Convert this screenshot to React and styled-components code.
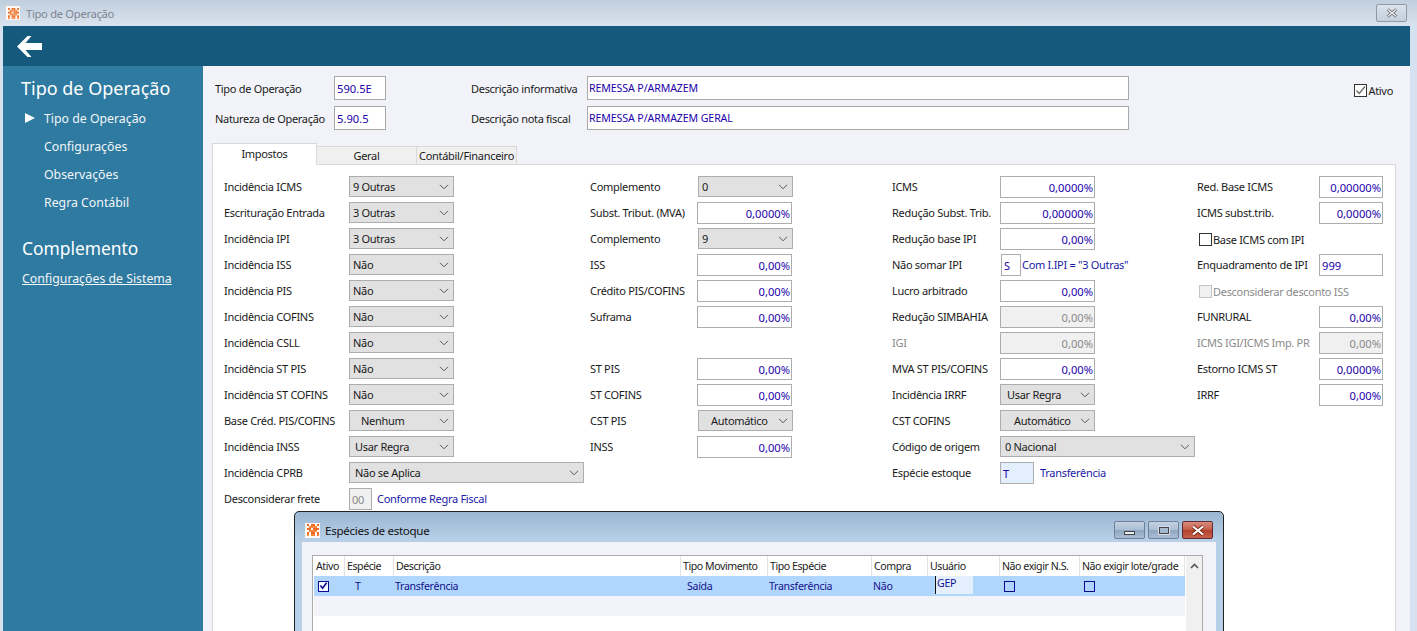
import React from "react";
import styled, { createGlobalStyle } from "styled-components";

const GlobalStyle = createGlobalStyle`
  html, body { margin: 0; padding: 0; background: #fff; }
  body {
    font-family: "Noto Sans", "Liberation Sans", sans-serif;
    font-size: 11px;
    letter-spacing: -0.3px;
    color: #1a1a1a;
  }
`;

const col1 = [
  { label: "Incidência ICMS", select: "9 Outras" },
  { label: "Escrituração Entrada", select: "3 Outras" },
  { label: "Incidência IPI", select: "3 Outras" },
  { label: "Incidência ISS", select: "Não" },
  { label: "Incidência PIS", select: "Não" },
  { label: "Incidência COFINS", select: "Não" },
  { label: "Incidência CSLL", select: "Não" },
  { label: "Incidência ST PIS", select: "Não" },
  { label: "Incidência ST COFINS", select: "Não" },
  { label: "Base Créd. PIS/COFINS", select: "Nenhum", pad: 8 },
  { label: "Incidência INSS", select: "Usar Regra", pad: 2 },
  { label: "Incidência CPRB", select: "Não se Aplica", pad: 2, width: 235 },
  { label: "Desconsiderar frete", code: "00", codeWidth: 23, codeOff: true, note: "Conforme Regra Fiscal", noteGap: 5 },
];

const col2 = [
  { label: "Complemento", select: "0", shift: 1 },
  { label: "Subst. Tribut. (MVA)", value: "0,0000%" },
  { label: "Complemento", select: "9", shift: 1 },
  { label: "ISS", value: "0,00%" },
  { label: "Crédito PIS/COFINS", value: "0,00%" },
  { label: "Suframa", value: "0,00%" },
  {},
  { label: "ST PIS", value: "0,00%" },
  { label: "ST COFINS", value: "0,00%" },
  { label: "CST PIS", select: "Automático", pad: 9, shift: 1 },
  { label: "INSS", value: "0,00%" },
];

const col3 = [
  { label: "ICMS", value: "0,0000%" },
  { label: "Redução Subst. Trib.", value: "0,00000%" },
  { label: "Redução base IPI", value: "0,00%" },
  { label: "Não somar IPI", code: "S", codeWidth: 20, codeShift: 1, note: "Com I.IPI = \"3 Outras\"", noteGap: 1 },
  { label: "Lucro arbitrado", value: "0,00%" },
  { label: "Redução SIMBAHIA", value: "0,00%", off: true },
  { label: "IGI", value: "0,00%", off: true, labelOff: true },
  { label: "MVA ST PIS/COFINS", value: "0,00%" },
  { label: "Incidência IRRF", select: "Usar Regra", pad: 3 },
  { label: "CST COFINS", select: "Automático", pad: 10 },
  { label: "Código de origem", select: "0 Nacional", pad: 1, width: 195 },
  { label: "Espécie estoque", code: "T", codeWidth: 34, codeTint: true, note: "Transferência", noteGap: 6 },
];

const col4 = [
  { label: "Red. Base ICMS", value: "0,00000%" },
  { label: "ICMS subst.trib.", value: "0,0000%" },
  { check: "Base ICMS com IPI" },
  { label: "Enquadramento de IPI", text: "999" },
  { check: "Desconsiderar desconto ISS", off: true },
  { label: "FUNRURAL", value: "0,00%" },
  { label: "ICMS IGI/ICMS Imp. PR", value: "0,00%", off: true, labelOff: true },
  { label: "Estorno ICMS ST", value: "0,0000%" },
  { label: "IRRF", value: "0,00%" },
];

const columns = [
  { rows: col1, width: 366, labelWidth: 125, controlWidth: 105 },
  { rows: col2, width: 302, labelWidth: 107, controlWidth: 95 },
  { rows: col3, width: 305, labelWidth: 108, controlWidth: 95 },
  { rows: col4, width: 190, labelWidth: 122, controlWidth: 64 },
];

const gridColumns = [
  ["Ativo", 31],
  ["Espécie", 49],
  ["Descrição", 287],
  ["Tipo Movimento", 87],
  ["Tipo Espécie", 104],
  ["Compra", 56],
  ["Usuário", 72],
  ["Não exigir N.S.", 80],
  ["Não exigir lote/grade", 105],
];

// orange mosaic of the app icon, [x, y] on a 6 x 6 raster
const logoCells = [
  [0, 0], [2, 0], [3, 0], [5, 0],
  [1, 1], [2, 1], [3, 1], [4, 1],
  [0, 2], [1, 2], [3, 2], [4, 2], [5, 2],
  [1, 3], [2, 3], [3, 3], [4, 3],
  [0, 4], [2, 4], [3, 4], [5, 4],
  [0, 5], [2, 5], [3, 5], [5, 5],
];

const Logo = ({ size = 14 }) => (
  <LogoBox $size={size}>
    <svg width={size - 3} height={size - 3} viewBox="0 0 12 12">
      {logoCells.map(([x, y]) => (
        <rect key={`${x}-${y}`} x={x * 2} y={y * 2} width="2" height="2" fill={y % 2 ? "#f5873f" : "#ee6a24"} />
      ))}
    </svg>
  </LogoBox>
);

const Chevron = () => (
  <svg width="10" height="6" viewBox="0 0 10 6" fill="none" stroke="#555" strokeWidth="1">
    <path d="M1 .8 L5 4.8 L9 .8" />
  </svg>
);

const FormRow = ({ row, labelWidth, controlWidth }) => {
  if (row.check) {
    return (
      <Row>
        <CheckLabel $off={row.off}>
          <CheckBox $off={row.off} />
          {row.check}
        </CheckLabel>
      </Row>
    );
  }
  if (!row.label) return <Row />;
  return (
    <Row>
      <Label $width={labelWidth} $off={row.labelOff}>{row.label}</Label>
      {row.select && (
        <Select $width={row.width || controlWidth} $pad={row.pad || 0} $shift={row.shift || 0}>
          <span>{row.select}</span>
          <Chevron />
        </Select>
      )}
      {row.value && <Field $width={controlWidth} $off={row.off} $right>{row.value}</Field>}
      {row.text && <Field $width={controlWidth}>{row.text}</Field>}
      {row.code && (
        <>
          <Code $width={row.codeWidth} $off={row.codeOff} $tint={row.codeTint} $shift={row.codeShift || 0}>
            {row.code}
          </Code>
          <Note $gap={row.noteGap}>{row.note}</Note>
        </>
      )}
    </Row>
  );
};

const App = () => (
  <Page>
    <GlobalStyle />
    <TitleBar>
      <Logo />
      <TitleText>Tipo de Operação</TitleText>
      <TitleClose>
        <svg width="14" height="10" viewBox="0 0 14 10" fill="none">
          <path d="M2.5 1.5 L11.5 8.5 M11.5 1.5 L2.5 8.5" stroke="#555" strokeWidth="2.8" />
          <path d="M2.5 1.5 L11.5 8.5 M11.5 1.5 L2.5 8.5" stroke="#f4f4f4" strokeWidth="1.4" />
        </svg>
      </TitleClose>
    </TitleBar>
    <Frame>
      <TopBar>
        <svg width="25" height="21" viewBox="0 0 25 21" fill="#fff">
          <path d="M10.5 0 L14.5 0 L8.5 7 L25 7 L25 14 L8.5 14 L14.5 21 L10.5 21 L0 10.5 Z" />
        </svg>
      </TopBar>
      <Main>
        <Sidebar>
          <SideTitle>Tipo de Operação</SideTitle>
          <SideItem $active>Tipo de Operação</SideItem>
          <SideItem>Configurações</SideItem>
          <SideItem>Observações</SideItem>
          <SideItem>Regra Contábil</SideItem>
          <SideSection>Complemento</SideSection>
          <SideLink>Configurações de Sistema</SideLink>
        </Sidebar>
        <Content>
          <Header>
            <HeaderGrid>
              <HeaderLabel>Tipo de Operação</HeaderLabel>
              <HeaderCode>590.5E</HeaderCode>
              <HeaderLabelWide>Descrição informativa</HeaderLabelWide>
              <HeaderText>REMESSA P/ARMAZEM</HeaderText>
              <HeaderLabel>Natureza de Operação</HeaderLabel>
              <HeaderCode>5.90.5</HeaderCode>
              <HeaderLabelWide>Descrição nota fiscal</HeaderLabelWide>
              <HeaderText>REMESSA P/ARMAZEM GERAL</HeaderText>
            </HeaderGrid>
            <ActiveCheck>
              <CheckBox>
                <svg width="11" height="11" viewBox="0 0 11 11" fill="none" stroke="#666" strokeWidth="1.2">
                  <path d="M1.5 5.5 L4.2 8.5 L10 1.5" />
                </svg>
              </CheckBox>
              Ativo
            </ActiveCheck>
          </Header>
          <Tabs>
            <Tab $active $width={105}>Impostos</Tab>
            <Tab $width={100}>Geral</Tab>
            <Tab $width={100}>Contábil/Financeiro</Tab>
          </Tabs>
          <Panel>
            {columns.map((col, i) => (
              <Column key={i} $width={col.width}>
                {col.rows.map((row, j) => (
                  <FormRow key={j} row={row} labelWidth={col.labelWidth} controlWidth={col.controlWidth} />
                ))}
              </Column>
            ))}
          </Panel>
        </Content>
      </Main>
    </Frame>

    <Dialog>
      <DialogBar>
        <Logo size={15} />
        <DialogTitle>Espécies de estoque</DialogTitle>
        <DialogButtons>
          <WinButton><MinGlyph /></WinButton>
          <WinButton><MaxGlyph /></WinButton>
          <WinButton $close>
            <svg width="16" height="11" viewBox="0 0 16 11" fill="none">
              <path d="M3 1.5 L13 9.5 M13 1.5 L3 9.5" stroke="#6b2015" strokeWidth="3.6" />
              <path d="M3 1.5 L13 9.5 M13 1.5 L3 9.5" stroke="#fff" strokeWidth="2.2" />
            </svg>
          </WinButton>
        </DialogButtons>
      </DialogBar>
      <DialogBody>
        <Table>
          <TableMain>
            <HeadRow>
              {gridColumns.map(([name, width]) => (
                <HeadCell key={name} $width={width}>{name}</HeadCell>
              ))}
            </HeadRow>
            <DataRow $selected>
              <DataCell $width={31}><GridCheck $checked>
                <svg width="10" height="10" viewBox="0 0 10 10" fill="none" stroke="#0a0a90" strokeWidth="1.8">
                  <path d="M1.5 4.5 L4 7.5 L8.5 1.5" />
                </svg>
              </GridCheck></DataCell>
              <DataCell $width={49} $indent={10}>T</DataCell>
              <DataCell $width={287} $indent={1}>Transferência</DataCell>
              <DataCell $width={87} $indent={6}>Saída</DataCell>
              <DataCell $width={104} $indent={1}>Transferência</DataCell>
              <DataCell $width={56} $indent={1}>Não</DataCell>
              <DataCell $width={72}><EditCell>GEP</EditCell></DataCell>
              <DataCell $width={80}><GridCheck /></DataCell>
              <DataCell $width={105}><GridCheck /></DataCell>
            </DataRow>
            <DataRow />
          </TableMain>
          <ScrollBar>
            <svg width="9" height="6" viewBox="0 0 9 6" fill="none" stroke="#555" strokeWidth="1.6">
              <path d="M1 5 L4.5 1.5 L8 5" />
            </svg>
          </ScrollBar>
        </Table>
      </DialogBody>
    </Dialog>
  </Page>
);

const Page = styled.div`
  position: relative;
  width: 1417px;
  height: 631px;
  overflow: hidden;
  display: flex;
  flex-direction: column;
  background: #d5e1ef;
`;

const TitleBar = styled.div`
  height: 26px;
  flex: none;
  display: flex;
  align-items: center;
  padding: 0 10px 0 6px;
  background: linear-gradient(180deg, #c0cedd 0%, #d9e3ee 100%);
`;

const LogoBox = styled.span`
  width: ${(p) => p.$size}px;
  height: ${(p) => p.$size}px;
  display: flex;
  align-items: center;
  justify-content: center;
  background: #fdf8f3;
  flex: none;
`;

const TitleText = styled.span`
  margin: 1px 0 0 6px;
  color: #7d8691;
  font-size: 11.2px;
`;

const TitleClose = styled.span`
  margin-left: auto;
  width: 31px;
  height: 18px;
  box-sizing: border-box;
  display: flex;
  align-items: center;
  justify-content: center;
  border: 1px solid #8c99a8;
  border-radius: 2px;
  background: linear-gradient(180deg, #dbe3ec 0%, #c3cfdc 100%);
`;

const Frame = styled.div`
  flex: 1;
  min-height: 0;
  margin: 0 7px 0 3px;
  display: flex;
  flex-direction: column;
`;

const TopBar = styled.div`
  height: 40px;
  flex: none;
  display: flex;
  align-items: center;
  padding-left: 14px;
  background: #155a7c;
`;

const Main = styled.div`
  flex: 1;
  min-height: 0;
  display: flex;
`;

const Sidebar = styled.div`
  width: 200px;
  flex: none;
  padding: 9px 0 0 18px;
  box-sizing: border-box;
  background: #2e7aa0;
  color: #fff;
  letter-spacing: 0;
`;

const SideTitle = styled.div`
  font-size: 18px;
  line-height: 26px;
  margin-bottom: 4px;
`;

const SideItem = styled.div`
  position: relative;
  margin-left: 23px;
  font-size: 12.3px;
  line-height: 28px;
  color: #f2f6f9;

  ${(p) =>
    p.$active &&
    `
    &::before {
      content: "";
      position: absolute;
      left: -19px;
      top: 8px;
      border-left: 10px solid #fff;
      border-top: 5px solid transparent;
      border-bottom: 5px solid transparent;
    }
  `}
`;

const SideSection = styled.div`
  font-size: 17.4px;
  line-height: 26px;
  margin: 18px 0 0 1px;
`;

const SideLink = styled.div`
  margin: 8px 0 0 1px;
  font-size: 12.3px;
  line-height: 20px;
  text-decoration: underline;
  color: #f2f6f9;
`;

const Content = styled.div`
  flex: 1;
  min-width: 0;
  padding: 10px 14px 0 9px;
  background: #f1f3f9;
  display: flex;
  flex-direction: column;
`;

const Header = styled.div`
  height: 68px;
  flex: none;
  display: flex;
  justify-content: space-between;
`;

const HeaderGrid = styled.div`
  display: grid;
  grid-template-columns: 119px 52px 85px 116px 542px;
  grid-auto-rows: 24px;
  row-gap: 6px;
  align-items: center;
  padding-left: 3px;
`;

const HeaderLabel = styled.span`
  white-space: nowrap;
`;

const HeaderLabelWide = styled.span`
  grid-column: 4;
  white-space: nowrap;
`;

const HeaderBox = styled.span`
  height: 24px;
  box-sizing: border-box;
  display: flex;
  align-items: center;
  padding-left: 2px;
  background: #fff;
  border: 1px solid #a9a9a9;
  color: #2200aa;
`;

const HeaderCode = styled(HeaderBox)`
  font-size: 11.2px;
  letter-spacing: 0;
`;

const HeaderText = styled(HeaderBox)`
  grid-column: 5;
  padding-left: 1px;
  font-size: 10.6px;
  letter-spacing: -0.1px;
`;

const ActiveCheck = styled.span`
  display: flex;
  align-items: center;
  height: 24px;
  margin: 2px 3px 0 0;
`;

const CheckBox = styled.span`
  width: 13px;
  height: 13px;
  flex: none;
  margin-right: 1px;
  display: flex;
  align-items: center;
  justify-content: center;
  box-sizing: border-box;
  border: 1px solid ${(p) => (p.$off ? "#c4c4c4" : "#333")};
  background: ${(p) => (p.$off ? "#f0f0f0" : "#fff")};
`;

const Tabs = styled.div`
  display: flex;
  align-items: flex-end;
  height: 21px;
  flex: none;
  position: relative;
  z-index: 1;
  margin-bottom: -1px;
`;

const Tab = styled.div`
  width: ${(p) => p.$width}px;
  height: ${(p) => (p.$active ? 22 : 19)}px;
  box-sizing: border-box;
  display: flex;
  align-items: center;
  justify-content: center;
  white-space: nowrap;
  border: 1px solid #d9d9d9;
  border-left-width: ${(p) => (p.$active ? 1 : 0)}px;
  border-bottom: ${(p) => (p.$active ? "1px solid #fff" : "1px solid #d9d9d9")};
  background: ${(p) => (p.$active ? "#fff" : "#f0f0f0")};
  padding-bottom: ${(p) => (p.$active ? 1 : 0)}px;
`;

const Panel = styled.div`
  flex: 1;
  min-height: 0;
  display: flex;
  padding: 11px 0 0 11px;
  background: #fff;
  border: 1px solid #d9d9d9;
  border-bottom: 0;
`;

const Column = styled.div`
  width: ${(p) => p.$width}px;
  flex: none;
  display: flex;
  flex-direction: column;
`;

const Row = styled.div`
  height: 26px;
  flex: none;
  display: flex;
  align-items: flex-start;
`;

const Label = styled.span`
  width: ${(p) => p.$width}px;
  flex: none;
  line-height: 22px;
  white-space: nowrap;
  color: ${(p) => (p.$off ? "#8a8a8a" : "#1a1a1a")};
`;

const Select = styled.div`
  width: ${(p) => p.$width}px;
  height: 21px;
  flex: none;
  margin-left: ${(p) => p.$shift}px;
  box-sizing: border-box;
  display: flex;
  align-items: center;
  justify-content: space-between;
  padding: 0 4px 0 3px;
  background: #e1e1e1;
  border: 1px solid #adadad;

  span {
    padding-left: ${(p) => p.$pad}px;
  }
`;

const Field = styled.div`
  width: ${(p) => p.$width}px;
  height: 22px;
  flex: none;
  box-sizing: border-box;
  display: flex;
  align-items: center;
  justify-content: ${(p) => (p.$right ? "flex-end" : "flex-start")};
  padding: 1px 1px 0 2px;
  font-size: 11.2px;
  letter-spacing: 0;
  background: ${(p) => (p.$off ? "#f0f0f0" : "#fff")};
  border: 1px solid #adadad;
  color: ${(p) => (p.$off ? "#8a8a8a" : "#2200aa")};
`;

const Code = styled.div`
  width: ${(p) => p.$width}px;
  height: 22px;
  flex: none;
  margin-left: ${(p) => p.$shift}px;
  box-sizing: border-box;
  display: flex;
  align-items: center;
  padding: 1px 0 0 2px;
  background: ${(p) => (p.$off ? "#f0f0f0" : p.$tint ? "#e3effc" : "#fff")};
  border: 1px solid #adadad;
  color: ${(p) => (p.$off ? "#8a8a8a" : "#2200aa")};
`;

const Note = styled.span`
  margin-left: ${(p) => p.$gap}px;
  line-height: 22px;
  color: #1a1aa8;
  white-space: nowrap;
`;

const CheckLabel = styled.span`
  display: flex;
  align-items: center;
  height: 22px;
  padding-left: 2px;
  white-space: nowrap;
  color: ${(p) => (p.$off ? "#8a8a8a" : "#1a1a1a")};
`;

const Dialog = styled.div`
  position: absolute;
  left: 294px;
  top: 511px;
  width: 930px;
  height: 160px;
  box-sizing: border-box;
  border: 1px solid #222;
  border-radius: 5px 5px 0 0;
  background: linear-gradient(180deg, #9bb6d3 0, #b9d1e8 30px, #b9d1e8 100%);
  padding: 0 7px;
`;

const DialogBar = styled.div`
  height: 30px;
  box-sizing: border-box;
  padding: 6px 0 0 3px;
  display: flex;
  align-items: center;
`;

const DialogTitle = styled.span`
  margin-left: 5px;
  font-size: 11.6px;
  color: #111;
`;

const DialogButtons = styled.div`
  margin-left: auto;
  margin-right: 3px;
  display: flex;
  gap: 3px;
`;

const WinButton = styled.span`
  width: 31px;
  height: 18px;
  box-sizing: border-box;
  display: flex;
  align-items: center;
  justify-content: center;
  border: 1px solid ${(p) => (p.$close ? "#5e2a35" : "#6f8198")};
  border-radius: 2px;
  background: ${(p) =>
    p.$close
      ? "linear-gradient(180deg, #d98b7c 0%, #c35a45 50%, #b2412c 51%, #c8604a 100%)"
      : "linear-gradient(180deg, #c5d3e3 0%, #aabdd3 50%, #8fa6c1 51%, #a9bdd3 100%)"};
`;

const MinGlyph = styled.span`
  width: 9px;
  height: 2px;
  margin-top: 5px;
  background: #e8edf3;
  border: 1px solid #444;
`;

const MaxGlyph = styled.span`
  width: 8px;
  height: 5px;
  background: #a7b9cd;
  border: 1px solid #444;
  outline: 1px solid #d5deea;
`;

const DialogBody = styled.div`
  height: 130px;
  padding: 13px 13px 0 10px;
  background: #f1f3f9;
`;

const Table = styled.div`
  height: 117px;
  box-sizing: border-box;
  display: flex;
  border: 1px solid #ababab;
  background: #fff;
  padding-left: 1px;
`;

const TableMain = styled.div`
  flex: 1;
  min-width: 0;
`;

const HeadRow = styled.div`
  display: flex;
  height: 20px;
`;

const HeadCell = styled.div`
  width: ${(p) => p.$width}px;
  flex: none;
  box-sizing: border-box;
  padding-left: 2px;
  display: flex;
  align-items: center;
  white-space: nowrap;
  font-size: 10.6px;
  letter-spacing: -0.45px;
  color: #222;
  border-right: 1px solid #e4e4e4;
`;

const DataRow = styled.div`
  display: flex;
  height: 20px;
  background: ${(p) => (p.$selected ? "#b1d6fd" : "#f1f3f9")};
`;

const DataCell = styled.div`
  width: ${(p) => p.$width}px;
  flex: none;
  box-sizing: border-box;
  padding-left: ${(p) => (p.$indent ? p.$indent : 2)}px;
  display: flex;
  align-items: center;
  font-size: 10.6px;
  letter-spacing: -0.3px;
  color: #11118c;
`;

const GridCheck = styled.span`
  width: 11px;
  height: 11px;
  margin-left: 2px;
  box-sizing: border-box;
  display: flex;
  align-items: center;
  justify-content: center;
  border: 1px solid #0a0a90;
  background: ${(p) => (p.$checked ? "#f4f8ff" : "transparent")};
`;

const EditCell = styled.span`
  width: 38px;
  height: 18px;
  margin: -2px 0 0 5px;
  padding-left: 1px;
  box-sizing: border-box;
  background: #e3effd;
  border-left: 1px solid #111;
  line-height: 14px;
  color: #11118c;
`;

const ScrollBar = styled.div`
  width: 17px;
  flex: none;
  display: flex;
  justify-content: center;
  padding-top: 7px;
  box-sizing: border-box;
  background: #f0f0f0;
  border-left: 1px solid #fff;
`;

export default App;
